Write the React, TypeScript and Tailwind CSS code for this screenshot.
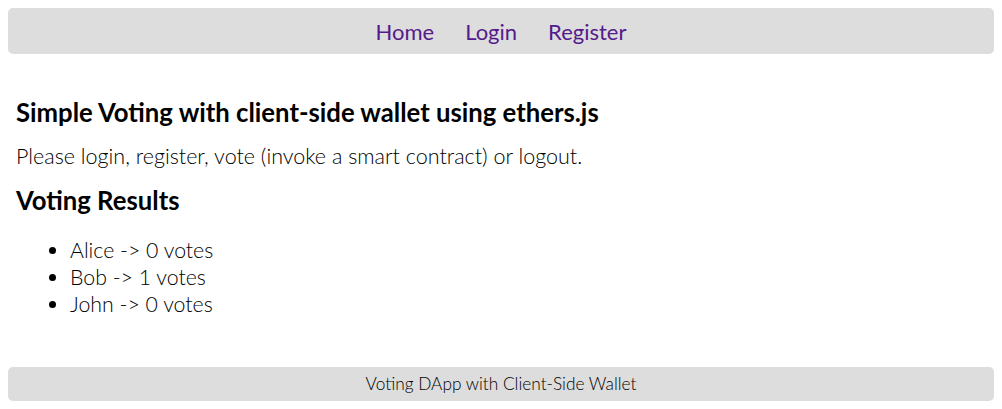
const results = [
  { name: "Alice", votes: 0 },
  { name: "Bob", votes: 1 },
  { name: "John", votes: 0 },
];

export default function App() {
  return (
    <div className="min-h-[409px] bg-white p-2 font-['Lato',sans-serif] text-black">
      <nav className="flex h-[46px] items-center justify-center gap-[31px] rounded-[5px] bg-[#dddddd] text-[22px]">
        <a href="#" className="text-[#551a8b]">Home</a>
        <a href="#" className="text-[#551a8b]">Login</a>
        <a href="#" className="text-[#551a8b]">Register</a>
      </nav>
      <main className="px-2 pt-[40px]">
        <h2 className="text-[25.7px] font-bold leading-[36px]">
          Simple Voting with client-side wallet using ethers.js
        </h2>
        <p className="mt-[12px] text-[21.5px] font-light leading-[28px]">
          Please login, register, vote (invoke a smart contract) or logout.
        </p>
        <h2 className="mt-[12px] text-[25.7px] font-bold leading-[36px]">Voting Results</h2>
        <ul className="mt-[19px] list-disc pl-[54px] text-[21.3px] font-light leading-[27px]">
          {results.map((r) => (
            <li key={r.name}>
              {r.name} -&gt; {r.votes} votes
            </li>
          ))}
        </ul>
      </main>
      <footer className="mt-[49px] flex h-[34px] items-center justify-center rounded-[5px] bg-[#dddddd] text-[17.3px] font-light">
        Voting DApp with Client-Side Wallet
      </footer>
    </div>
  );
}
